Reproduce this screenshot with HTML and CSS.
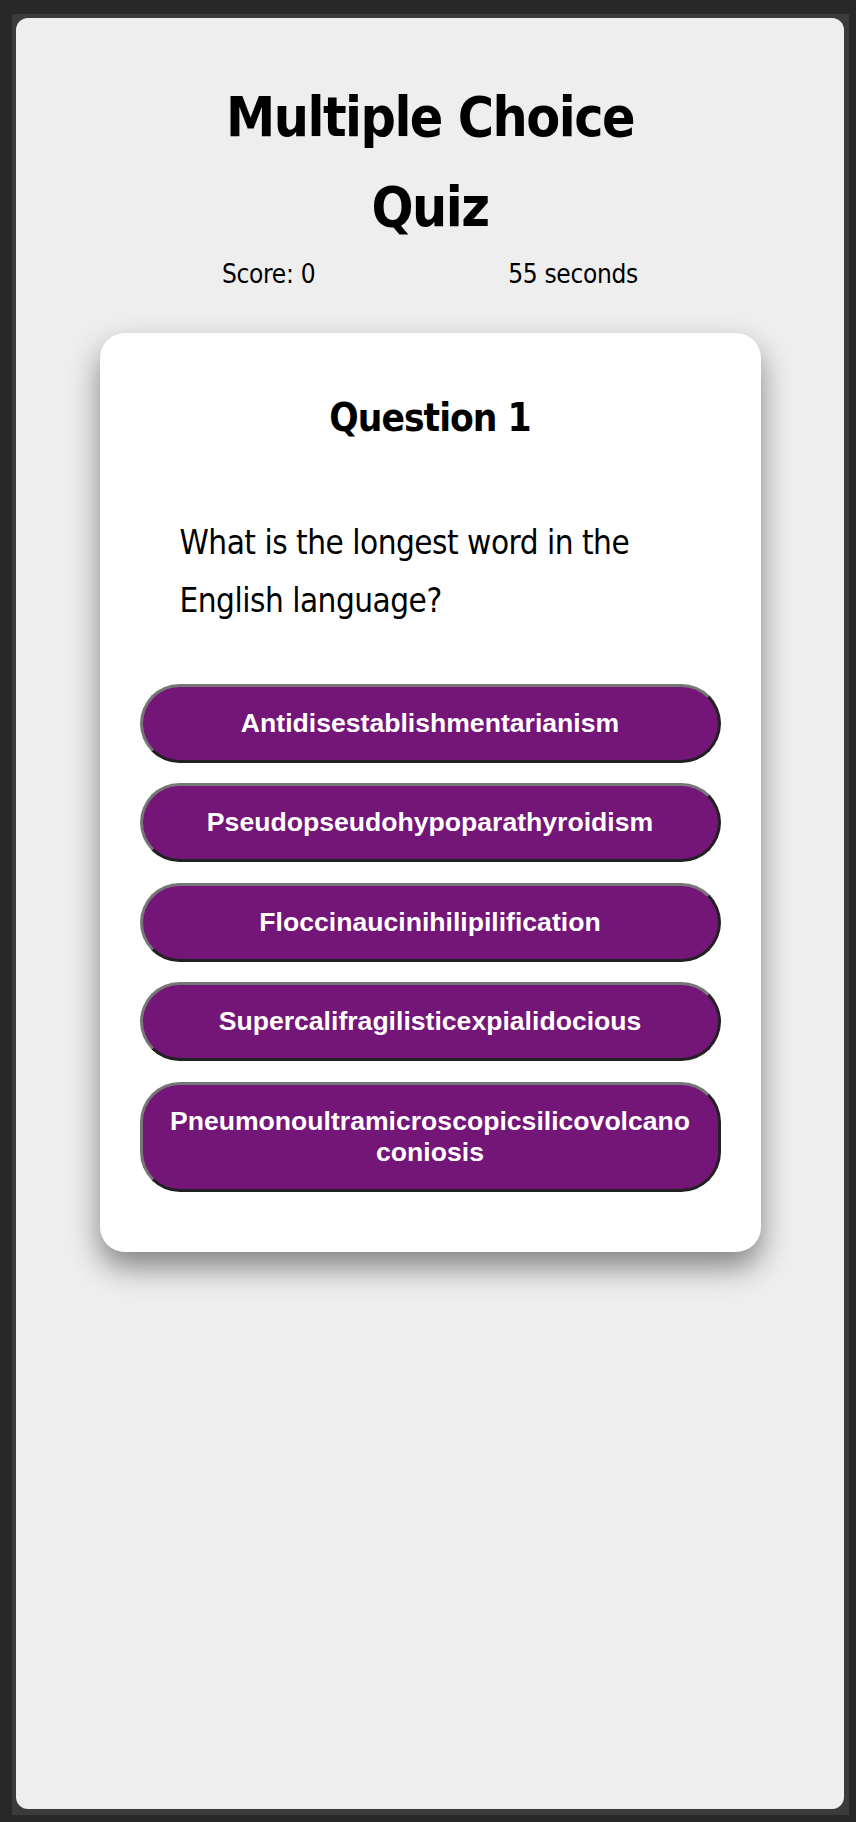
FILE: index.html
```html
<!DOCTYPE html>
<html lang="en">
<head>
<meta charset="utf-8">
<title>Multiple Choice Quiz</title>
<link rel="stylesheet" href="styles.css">
</head>
<body>
<div class="frame">
  <main class="panel">
    <h1 class="title">Multiple Choice Quiz</h1>
    <div class="stats">
      <span class="score">Score: 0</span>
      <span class="timer">55 seconds</span>
    </div>
    <section class="card">
      <h2 class="question-num">Question 1</h2>
      <p class="question">What is the longest word in the English language?</p>
      <div class="answers">
        <button class="answer">Antidisestablishmentarianism</button>
        <button class="answer">Pseudopseudohypoparathyroidism</button>
        <button class="answer">Floccinaucinihilipilification</button>
        <button class="answer">Supercalifragilisticexpialidocious</button>
        <button class="answer">Pneumonoultramicroscopicsilicovolcanoconiosis</button>
      </div>
    </section>
  </main>
</div>
</body>
</html>
```
FILE: styles.css
```css
* { box-sizing: border-box; }

html, body { height: 100%; }

body {
  margin: 0;
  padding: 14px 7px 7px 12px;
  background: #282828;
  font-family: "DejaVu Sans Condensed", "Liberation Sans", sans-serif;
  color: #000;
}

.frame {
  height: 100%;
  background: #3b3b3b;
  padding: 4px 5px 6px 4px;
}

.panel {
  height: 100%;
  background: #eeeeee;
  border-radius: 12px;
  padding-top: 55px;
  display: flex;
  flex-direction: column;
  align-items: center;
}

.title {
  margin: 0;
  width: 420px;
  text-align: center;
  font-size: 55px;
  letter-spacing: -1.5px;
  line-height: 89.5px;
  font-weight: 700;
}

.stats {
  margin-top: 2px;
  width: 416px;
  display: flex;
  justify-content: space-between;
  font-size: 26px;
  letter-spacing: -0.3px;
  line-height: 40px;
}

.card {
  margin-top: 39px;
  width: 661px;
  background: #fff;
  border-radius: 25px;
  padding: 40px;
  box-shadow: 0 15px 30px rgba(0, 0, 0, 0.45);
}

.question-num {
  margin: 16px 0 0;
  text-align: center;
  font-size: 38.5px;
  letter-spacing: -1px;
  line-height: 57px;
  font-weight: 700;
}

.question {
  margin: 67.6px 0 0;
  padding: 0 40px;
  font-size: 33px;
  letter-spacing: -0.5px;
  line-height: 58px;
}

.answers {
  margin-top: 54.4px;
  display: flex;
  flex-direction: column;
}

.answer {
  margin: 0 0 20.4px;
  padding: 21px 22px;
  width: 100%;
  background: #741578;
  color: #fff;
  border: 3px outset #767676;
  border-radius: 40px;
  font-family: "Liberation Sans", Arial, sans-serif;
  font-weight: 700;
  font-size: 26.6px;
  line-height: normal;
  text-align: center;
  overflow-wrap: anywhere;
}
```
